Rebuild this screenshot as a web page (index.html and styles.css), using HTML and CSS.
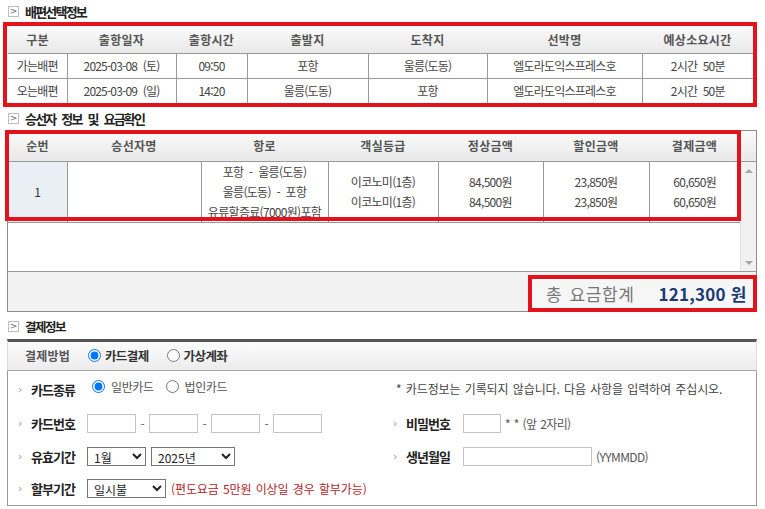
FILE: index.html
```html
<!DOCTYPE html>
<html lang="ko">
<head>
<meta charset="utf-8">
<title>예매정보</title>
<link rel="stylesheet" href="styles.css">
</head>
<body>
<div class="page">

  <div class="sec-title"><span class="sec-icon">&gt;</span><span class="sec-text">배편선택정보</span></div>
  <div class="sel-box">
    <table class="sel-table">
      <colgroup>
        <col style="width:59px"><col style="width:109px"><col style="width:71px"><col style="width:121px"><col style="width:119px"><col style="width:155px"><col style="width:111px">
      </colgroup>
      <thead>
        <tr><th>구분</th><th>출항일자</th><th>출항시간</th><th>출발지</th><th>도착지</th><th>선박명</th><th>예상소요시간</th></tr>
      </thead>
      <tbody>
        <tr><td>가는배편</td><td>2025-03-08 (토)</td><td>09:50</td><td>포항</td><td>울릉(도동)</td><td>엘도라도익스프레스호</td><td>2시간 50분</td></tr>
        <tr><td>오는배편</td><td>2025-03-09 (일)</td><td>14:20</td><td>울릉(도동)</td><td>포항</td><td>엘도라도익스프레스호</td><td>2시간 50분</td></tr>
      </tbody>
    </table>
  </div>

  <div class="sec-title sec2"><span class="sec-icon">&gt;</span><span class="sec-text">승선자 정보 및 요금확인</span></div>
  <div class="pax">
    <table class="pax-head">
      <colgroup>
        <col style="width:59px"><col style="width:134px"><col style="width:127px"><col style="width:110px"><col style="width:105px"><col style="width:106px"><col style="width:91px"><col style="width:16px">
      </colgroup>
      <tr><th>순번</th><th>승선자명</th><th>항로</th><th>객실등급</th><th>정상금액</th><th>할인금액</th><th>결제금액</th><th class="filler"></th></tr>
    </table>
    <div class="pax-body">
      <div class="pax-scroll">
        <table class="pax-table">
          <colgroup>
            <col style="width:59px"><col style="width:134px"><col style="width:127px"><col style="width:110px"><col style="width:105px"><col style="width:106px"><col style="width:91px">
          </colgroup>
          <tr>
            <td class="num">1</td>
            <td></td>
            <td class="route">포항 - 울릉(도동)<br>울릉(도동) - 포항<br>유류할증료(7000원)포함</td>
            <td>이코노미(1층)<br>이코노미(1층)</td>
            <td>84,500원<br>84,500원</td>
            <td>23,850원<br>23,850원</td>
            <td>60,650원<br>60,650원</td>
          </tr>
        </table>
      </div>
      <div class="scrollbar">
        <span class="arrow up"></span>
        <span class="arrow down"></span>
      </div>
    </div>
    <div class="total-row">
      <div class="total-box"><span class="total-label">총 요금합계</span><span class="total-value">121,300 원</span></div>
    </div>
    <div class="mark"></div>
  </div>

  <div class="sec-title sec3"><span class="sec-icon">&gt;</span><span class="sec-text small">결제정보</span></div>
  <div class="pay">
    <div class="pay-method">
      <span class="pm-label">결제방법</span>
      <label class="pm-opt"><input type="radio" name="pm" checked><b>카드결제</b></label>
      <label class="pm-opt"><input type="radio" name="pm"><b>가상계좌</b></label>
    </div>
    <div class="pay-form">
      <div class="cell">
        <span class="bul">›</span><span class="flabel">카드종류</span>
        <label class="copt first"><input type="radio" name="ct" checked>일반카드</label>
        <label class="copt"><input type="radio" name="ct">법인카드</label>
      </div>
      <div class="cell right notice">* 카드정보는 기록되지 않습니다. 다음 사항을 입력하여 주십시오.</div>

      <div class="cell">
        <span class="bul">›</span><span class="flabel">카드번호</span>
        <input class="tin card" type="text"><span class="dash">-</span>
        <input class="tin card" type="text"><span class="dash">-</span>
        <input class="tin card" type="text"><span class="dash">-</span>
        <input class="tin card" type="text">
      </div>
      <div class="cell right">
        <span class="bul">›</span><span class="flabel rl">비밀번호</span>
        <input class="tin pw" type="password"><span class="hint">* * (앞 2자리)</span>
      </div>

      <div class="cell">
        <span class="bul">›</span><span class="flabel">유효기간</span>
        <select class="sel month"><option>1월</option></select>
        <select class="sel year"><option>2025년</option></select>
      </div>
      <div class="cell right">
        <span class="bul">›</span><span class="flabel rl">생년월일</span>
        <input class="tin birth" type="text"><span class="hint">(YYMMDD)</span>
      </div>

      <div class="cell">
        <span class="bul">›</span><span class="flabel">할부기간</span>
        <select class="sel inst"><option>일시불</option></select>
        <span class="warn">(편도요금 5만원 이상일 경우 할부가능)</span>
      </div>
      <div class="cell right"></div>
    </div>
  </div>

</div>
</body>
</html>
```

FILE: styles.css
```css
* { box-sizing: border-box; }
html, body { margin: 0; padding: 0; background: #fff; }
body {
  font-family: "Noto Sans CJK KR", "Noto Sans", sans-serif;
  color: #444;
  font-size: 12px;
  width: 765px;
  height: 509px;
  overflow: hidden;
}
.page { width: 765px; }

/* section titles */
.sec-title {
  height: 22px;
  display: flex;
  align-items: center;
  padding-left: 8px;
}
.sec-icon {
  width: 11px;
  height: 11px;
  border: 1px solid #bdbdbd;
  color: #666;
  font-size: 9px;
  line-height: 9px;
  text-align: center;
  font-family: "DejaVu Sans", sans-serif;
}
.sec-text {
  margin-left: 6px;
  font-size: 13px;
  font-weight: 700;
  color: #222;
  letter-spacing: -1.8px;
  word-spacing: 4px;
}
.sec-text.small { font-size: 12.5px; letter-spacing: -1.5px; }
.sec2 { height: 23px; }
.sec3 { height: 27px; padding-top: 2px; }

/* section 1 */
.sel-box {
  margin-left: 3px;
  width: 754px;
  border: 4px solid #e3131d;
  padding: 0 0 0 1px;
}
.sel-table {
  width: 745px;
  table-layout: fixed;
  border-collapse: collapse;
}
.sel-table th {
  height: 27px;
  background: linear-gradient(#fafafa, #e9e9e9);
  color: #555;
  font-size: 12px;
  font-weight: 700;
  letter-spacing: 0.3px;
  border-bottom: 1px solid #999;
  padding: 0;
}
.sel-table td {
  height: 25px;
  text-align: center;
  border: 1px solid #999;
  border-bottom: 0;
  font-size: 12px;
  letter-spacing: -0.8px;
  word-spacing: 3px;
  color: #444;
  padding: 0;
}
.sel-table tr td:first-child { border-left: 0; }
.sel-table tr td:last-child { border-right: 0; }

/* section 2 */
.pax {
  position: relative;
  margin-left: 7px;
  width: 750px;
  border: 1px solid #8c8c8c;
}
.pax-head {
  width: 748px;
  table-layout: fixed;
  border-collapse: collapse;
}
.pax-head th {
  height: 30px;
  background: linear-gradient(#fafafa, #e9e9e9);
  color: #555;
  font-size: 12px;
  font-weight: 700;
  letter-spacing: 0.3px;
  border-bottom: 1px solid #999;
  padding: 0;
}
.pax-body {
  display: flex;
  height: 109px;
}
.pax-scroll {
  width: 732px;
  overflow: hidden;
}
.pax-table {
  width: 732px;
  table-layout: fixed;
  border-collapse: collapse;
}
.pax-table td {
  height: 60px;
  border-right: 1px solid #999;
  border-bottom: 1px solid #999;
  text-align: center;
  vertical-align: middle;
  font-size: 12px;
  line-height: 20px;
  letter-spacing: -0.7px;
  word-spacing: 3px;
  color: #444;
  padding: 0;
}
.pax-table td:last-child { border-right: 0; }
.pax-table td.num { background: #eaeff6; color: #333; }
.pax-table td.route { white-space: nowrap; overflow: hidden; }
.scrollbar {
  width: 16px;
  background: #f1f1f1;
  border-left: 1px solid #e2e2e2;
  display: flex;
  flex-direction: column;
  justify-content: space-between;
  align-items: center;
  padding: 7px 0 6px;
}
.arrow { width: 0; height: 0; border-left: 4px solid transparent; border-right: 4px solid transparent; }
.arrow.up { border-bottom: 4px solid #a8a8a8; }
.arrow.down { border-top: 4px solid #a8a8a8; }
.total-row {
  height: 40px;
  border-top: 1px solid #999;
  background: #f2f2f2;
  display: flex;
  justify-content: flex-end;
  align-items: flex-end;
}
.total-box {
  width: 229px;
  height: 37px;
  margin-right: -1px;
  margin-bottom: -1px;
  border: 4px solid #e3131d;
  background: #f6f6f6;
  display: flex;
  align-items: center;
  padding-left: 14px;
}
.total-label {
  font-size: 17px;
  color: #777;
  letter-spacing: 0.6px;
  word-spacing: 2px;
}
.total-value {
  margin-left: 24px;
  font-size: 17px;
  font-weight: 700;
  color: #1c3a76;
  letter-spacing: 0.2px;
}
.mark {
  position: absolute;
  left: -3px;
  top: -1px;
  width: 736px;
  height: 91px;
  border: 4px solid #e3131d;
  pointer-events: none;
}

/* section 3 */
.pay {
  margin-left: 7px;
  width: 750px;
}
.pay-method {
  height: 32px;
  border-top: 3px solid #555;
  border-bottom: 1px solid #a8a8a8;
  border-left: 1px solid #ddd;
  border-right: 1px solid #ddd;
  background: linear-gradient(#fcfcfc, #ececec);
  display: flex;
  align-items: center;
  padding-left: 17px;
}
.pm-label {
  font-size: 12px;
  font-weight: 700;
  color: #555;
  letter-spacing: 0.2px;
  margin-right: 18px;
}
.pm-opt {
  display: flex;
  align-items: center;
  margin-right: 18px;
  font-size: 12.5px;
  color: #333;
  letter-spacing: -0.6px;
}
.pm-opt b { font-weight: 700; }
.pm-opt input { margin: 0 4px 0 0; width: 13px; height: 13px; }
.pay-form {
  height: 135px;
  border: 1px solid #999;
  border-top: 0;
  padding-top: 2px;
  display: grid;
  grid-template-columns: 385px 1fr;
  grid-template-rows: 34px 33px 33px 32px;
}
.cell {
  display: flex;
  align-items: center;
  padding-left: 10px;
}
.cell.right { padding-left: 0; }
.cell.notice { padding-left: 3px; font-size: 12px; color: #444; letter-spacing: -0.1px; word-spacing: 1px; padding-bottom: 2px; }
.bul {
  width: 7px;
  color: #999;
  font-size: 11px;
  font-family: "DejaVu Sans", sans-serif;
  line-height: 1;
}
.flabel {
  width: 56px;
  margin-left: 6px;
  font-size: 13px;
  font-weight: 700;
  color: #222;
  letter-spacing: -1px;
}
.flabel.rl { width: 57px; }
.copt {
  display: flex;
  align-items: center;
  font-size: 12px;
  color: #555;
  letter-spacing: -0.4px;
  margin-right: 12px;
  margin-bottom: 6px;
}
.copt.first { margin-left: 5px; }
.copt input { margin: 0 6px 0 0; width: 13px; height: 13px; }
.tin {
  height: 19px;
  border: 1px solid #c4c4c4;
  background: #fff;
  padding: 0;
  margin: 0;
}
.tin.card { width: 49px; }
.tin.pw { width: 38px; }
.tin.birth { width: 129px; }
.dash { width: 13px; text-align: center; color: #666; font-size: 12px; }
.hint { margin-left: 4px; font-size: 12px; color: #555; letter-spacing: -0.6px; word-spacing: 1px; }
.sel {
  height: 19px;
  border: 1px solid #777;
  background: #fff;
  font-family: "Noto Sans CJK KR", sans-serif;
  font-size: 12px;
  color: #222;
  padding: 0 0 0 2px;
  margin: 0;
  border-radius: 0;
}
.sel.month { width: 59px; }
.sel.year { width: 84px; margin-left: 5px; }
.sel.inst { width: 79px; }
.warn {
  margin-left: 5px;
  color: #b3262c;
  font-size: 12px;
  letter-spacing: -0.1px;
  word-spacing: 1px;
}
```
